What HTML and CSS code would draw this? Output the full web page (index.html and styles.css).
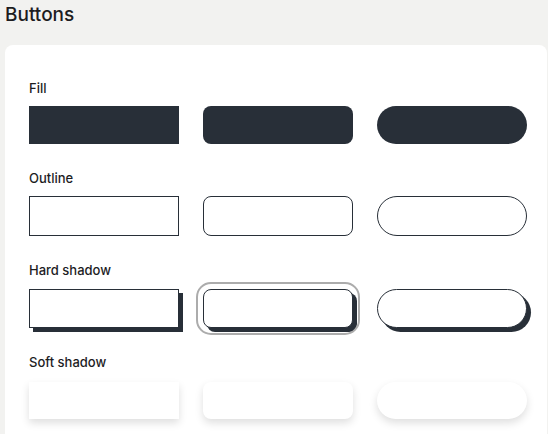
FILE: index.html
```html
<!DOCTYPE html>
<html lang="en">
<head>
    <meta charset="UTF-8">
    <meta name="viewport" content="width=device-width, initial-scale=1.0">
    <title>Buttons</title>
    <link rel="stylesheet" href="styles.css">
</head>
<body>
    <h1>Buttons</h1>
    <div class="card">
        <div class="group">
            <div class="label">Fill</div>
            <div class="row">
                <button class="btn fill square"></button>
                <button class="btn fill rounded"></button>
                <button class="btn fill pill"></button>
            </div>
        </div>
        <div class="group">
            <div class="label">Outline</div>
            <div class="row">
                <button class="btn outline square"></button>
                <button class="btn outline rounded"></button>
                <button class="btn outline pill"></button>
            </div>
        </div>
        <div class="group">
            <div class="label">Hard shadow</div>
            <div class="row">
                <button class="btn hard square"></button>
                <button class="btn hard rounded focused"></button>
                <button class="btn hard pill"></button>
            </div>
        </div>
        <div class="group">
            <div class="label">Soft shadow</div>
            <div class="row">
                <button class="btn soft square"></button>
                <button class="btn soft rounded"></button>
                <button class="btn soft pill"></button>
            </div>
        </div>
    </div>
</body>
</html>
```

FILE: styles.css
```css
body{
    margin: 0;
    padding: 0 1px 0 5px;
    background-color: #f2f2f0;
    font-family: Inter, "Noto Sans", sans-serif;
    color: #1d1d1f;
    overflow: hidden;
    height: 100vh;
    box-sizing: border-box;
}
h1{
    margin: 0;
    padding-top: 3px;
    height: 42px;
    font-size: 19px;
    font-weight: 500;
    line-height: 24px;
}
.card{
    background-color: white;
    border-radius: 8px 8px 0 0;
    padding: 35px 20px 0 24px;
    height: calc(100vh - 45px);
    box-sizing: border-box;
}
.group{
    margin-bottom: 26px;
}
.label{
    font-size: 13px;
    font-weight: 500;
    line-height: 16px;
    margin-bottom: 10px;
}
.row{
    display: flex;
    gap: 24px;
}
.btn{
    width: 150px;
    height: 40px;
    padding: 0;
    border: 1px solid #282f38;
    background-color: white;
    box-sizing: border-box;
}
.square{
    border-radius: 0;
}
.rounded{
    border-radius: 8px;
}
.pill{
    border-radius: 20px;
}
/* fill */
.fill{
    height: 38px;
    background-color: #282f38;
    border: none;
}
.fill.pill{
    border-radius: 19px;
}
/* hard shadow */
.hard{
    box-shadow: 4px 4px 0 #282f38;
    height: 39px;
    margin-top: 1px;
}
.focused{
    outline: 2px solid #acacac;
    outline-offset: 5px;
}
/* soft shadow */
.soft{
    height: 37px;
    border: none;
    margin-top: 2px;
    box-shadow: 0 4px 8px rgba(0,0,0,0.13);
}
.soft.pill{
    border-radius: 19px;
}
```
